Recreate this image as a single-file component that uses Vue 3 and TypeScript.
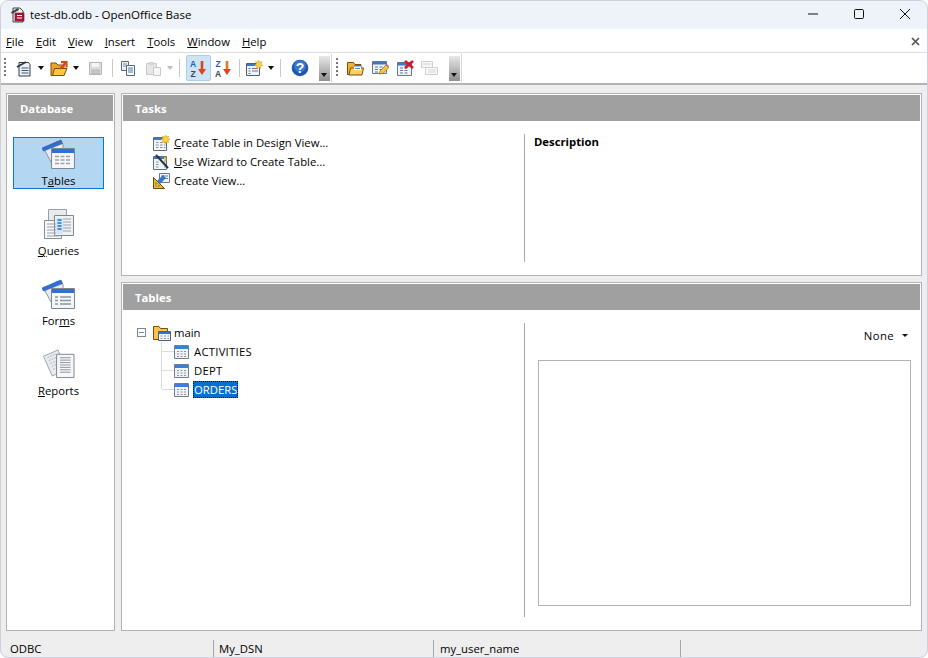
<script setup lang="ts">
const menus = [
  { u: 'F', r: 'ile' },
  { u: 'E', r: 'dit' },
  { u: 'V', r: 'iew' },
  { u: 'I', r: 'nsert' },
  { u: 'T', r: 'ools' },
  { u: 'W', r: 'indow' },
  { u: 'H', r: 'elp' },
]
const tables = ['ACTIVITIES', 'DEPT', 'ORDERS']
</script>

<template>
  <div class="window">
    <header class="titlebar">
      <svg class="app-icon" width="16" height="17" viewBox="0 0 16 17">
        <path d="M3 2h7l3 3v11H3z" fill="#f2f2f2" stroke="#444" />
        <path d="M1 6l7-4 1 2-7 4z" fill="#444" />
        <rect x="5" y="7" width="9" height="8" fill="#a81838" stroke="#6a0f22" stroke-width=".6" />
        <path d="M7 9.500h5M7 12h5" stroke="#fff" />
      </svg>
      <span class="title">test-db.odb - OpenOffice Base</span>
      <div class="win-controls">
        <svg width="12" height="12" viewBox="0 0 12 12"><path d="M1 6h10" stroke="#111" /></svg>
        <svg width="12" height="12" viewBox="0 0 12 12"><rect x="1.500" y="1.500" width="9" height="9" rx="1.200" fill="none" stroke="#111" /></svg>
        <svg width="12" height="12" viewBox="0 0 12 12"><path d="M1 1l10 10M11 1L1 11" stroke="#111" /></svg>
      </div>
    </header>

    <nav class="menubar">
      <span v-for="m in menus" :key="m.u" class="menu-item"><u>{{ m.u }}</u>{{ m.r }}</span>
      <svg class="menu-close" width="9" height="9" viewBox="0 0 9 9"><path d="M1 1l7 7M8 1L1 8" stroke="#555" stroke-width="1.700" /></svg>
    </nav>

    <div class="toolbar">
      <span class="grip"></span>
      <span class="tool w-new">
        <svg width="16" height="17" viewBox="0 0 16 17">
          <path d="M3 2.500h9.500l1.500 2v11.500H3z" fill="#f0f3f6" stroke="#2c3a48" />
          <path d="M1 7l9-5" stroke="#2c3a48" stroke-width="1.800" />
          <path d="M5.500 8h7M5.500 10.500h7M5.500 13h7" stroke="#35587a" stroke-width="1.200" />
        </svg>
      </span>
      <span class="drop"></span>
      <span class="tool w-open">
        <svg width="18" height="17" viewBox="0 0 18 17">
          <path d="M1 3h5l2 2h6v10.500H1z" fill="#eaa91c" stroke="#7a4c08" />
          <path d="M2.500 15.500l2-7h12.500l-3 7z" fill="#fcc93a" stroke="#7a4c08" />
          <path d="M10 9l5.500-6M11 2.200h5.500v5.300" fill="none" stroke="#d9481a" stroke-width="2.200" />
        </svg>
      </span>
      <span class="drop"></span>
      <span class="tool w-save">
        <svg width="15" height="15" viewBox="0 0 15 15">
          <path d="M1.500 1.500h12v12h-12z" fill="#dcdcdc" stroke="#b4b4b4" />
          <path d="M4 2h7v4H4z" fill="#f6f6f6" />
          <path d="M4 9h7v4H4z" fill="#c8c8c8" stroke="#b4b4b4" />
        </svg>
      </span>
      <span class="sep s-a"></span>
      <span class="tool w-copy">
        <svg width="16" height="16" viewBox="0 0 16 16">
          <path d="M1.500 1.500h7v9h-7z" fill="#eef1f4" stroke="#5a6674" />
          <path d="M3 4h4M3 6h4" stroke="#7f8b97" />
          <path d="M6.500 5.500h8v10h-8z" fill="#fff" stroke="#52657a" />
          <path d="M8 8h5M8 10h5M8 12h5" stroke="#3a78b0" />
        </svg>
      </span>
      <span class="tool w-paste">
        <svg width="17" height="16" viewBox="0 0 17 16">
          <path d="M1.500 3.500h10v11h-10z" fill="#e6e6e6" stroke="#c8c8c8" />
          <path d="M4 2h5v3H4z" fill="#d4d4d4" />
          <path d="M8.500 7.500h7v8h-7z" fill="#f6f6f6" stroke="#c8c8c8" />
        </svg>
      </span>
      <span class="drop faded"></span>
      <span class="sep s-b"></span>
      <span class="tool w-sort active">
        <svg width="17" height="18" viewBox="0 0 17 18">
          <text x="0" y="8" class="sort-letter" fill="#1f5fb4">A</text>
          <text x="0.500" y="17.500" class="sort-letter" fill="#33475c">Z</text>
          <path d="M12 2v11" stroke="#d8481c" stroke-width="2.600" />
          <path d="M8 10l4 6 4-6z" fill="#d8481c" />
        </svg>
      </span>
      <span class="tool w-sort2">
        <svg width="17" height="18" viewBox="0 0 17 18">
          <text x="0.500" y="8" class="sort-letter" fill="#1f5fb4">Z</text>
          <text x="0" y="17.500" class="sort-letter" fill="#33475c">A</text>
          <path d="M12 2v11" stroke="#e8742c" stroke-width="2.600" />
          <path d="M8 10l4 6 4-6z" fill="#d8481c" />
        </svg>
      </span>
      <span class="sep s-c"></span>
      <span class="tool w-form">
        <svg width="18" height="17" viewBox="0 0 18 17">
          <path d="M1.500 3.500h13v12h-13z" fill="#f1f4f7" stroke="#4e5f72" />
          <path d="M2 4h12v2H2z" fill="#3a78cc" />
          <path d="M3.500 8.500h2M7 8.500h6M3.500 11h2M7 11h6M3.500 13.500h2" stroke="#66788a" />
          <path d="M13.500 0l1 2.300L17 1.500l-1 2.500 2 1.500-2.500.6.200 2.400-2-1.500-2 1.500.2-2.400L9.500 5.500l2-1.500-1-2.500 2.500.8z" fill="#f9d23c" stroke="#d49a1a" stroke-width=".5" />
        </svg>
      </span>
      <span class="drop"></span>
      <span class="sep s-d"></span>
      <span class="tool w-help">
        <svg width="18" height="18" viewBox="0 0 18 18">
          <circle cx="9" cy="9" r="8.300" fill="#1f57b0" />
          <circle cx="9" cy="7" r="6" fill="#3a78cf" />
          <text x="9" y="14" class="help-q" text-anchor="middle">?</text>
        </svg>
      </span>
      <span class="overflow first"><i></i></span>
      <span class="tb-end"></span>
      <span class="grip g2"></span>
      <span class="tool w-a">
        <svg width="17" height="15" viewBox="0 0 17 15">
          <path d="M.500 1.500h6l1.500 2h6v10H.500z" fill="#f0b52a" stroke="#7a4c08" />
          <path d="M2 14l1.500-7h13L15 14z" fill="#fcd262" stroke="#7a4c08" />
          <path d="M7 4h7v5H7z" fill="#fff" />
          <path d="M7 4h7v1.600H7z" fill="#3a78cc" />
          <path d="M8 7.500h5" stroke="#6e7e8e" />
        </svg>
      </span>
      <span class="tool w-b">
        <svg width="17" height="16" viewBox="0 0 17 16">
          <path d="M.500 1.500h14v12H.500z" fill="#f1f4f7" stroke="#66788a" />
          <path d="M1 2h13v2.500H1z" fill="#3a78cc" />
          <path d="M3 7h3M7.500 7h3M3 9.500h3M7.500 9.500h3M3 12h3" stroke="#66788a" />
          <path d="M7 14l1-3 6-6 3 2.500-6 6z" fill="#f4c542" stroke="#8a6a1a" stroke-width=".7" />
          <path d="M14 5l1-1 2 2-1 1.500z" fill="#ec5a7a" />
        </svg>
      </span>
      <span class="tool w-c">
        <svg width="17" height="16" viewBox="0 0 17 16">
          <path d="M.500 2.500h14v13H.500z" fill="#f1f4f7" stroke="#66788a" />
          <path d="M1 3h13v2.500H1z" fill="#3a78cc" />
          <path d="M3 8h3M7.500 8h3M3 10.500h3M7.500 10.500h3M3 13h3M7.500 13h3" stroke="#66788a" />
          <path d="M8 1l8 7M16 1L8 8" stroke="#d3182c" stroke-width="2.600" />
        </svg>
      </span>
      <span class="tool w-d">
        <svg width="17" height="14" viewBox="0 0 17 14">
          <path d="M.500.500h11v6H.500z" fill="#f6f6f6" stroke="#cfcfcf" />
          <path d="M4.500 6.500h12v7h-12z" fill="#fafafa" stroke="#cfcfcf" />
          <path d="M2 3h8M7 9h8M7 11h8" stroke="#d6d6d6" />
        </svg>
      </span>
      <span class="overflow second"><i></i></span>
      <span class="tb-end"></span>
    </div>

    <div class="body">
      <aside class="panel sidebar">
        <div class="panel-head">Database</div>
        <ul class="nav-list">
          <li class="nav-item selected">
            <svg width="33" height="30" viewBox="0 0 33 30">
              <path d="M2 10l14-8 5 3v18H9z" fill="#e8ecf1" stroke="#8b97a3" />
              <path d="M0 9L19 1l1.500 3.500L1.500 12z" fill="#2f6fd6" stroke="#1f4fae" stroke-width=".6" />
              <path d="M9.500 9.500h23v20h-23z" fill="#f4f6f8" stroke="#7d8791" />
              <path d="M10 10h22v4H10z" fill="#2f6fd6" />
              <path d="M13 17.500h16M13 21h16M13 24.500h16" stroke="#9aa4ae" stroke-width="1.500" stroke-dasharray="4 1.500" />
            </svg>
            <span>T<u>a</u>bles</span>
          </li>
          <li class="nav-item">
            <svg width="30" height="30" viewBox="0 0 30 30">
              <path d="M4.500.500h18v18h-18z" fill="#e8eaec" stroke="#98a0a8" />
              <path d="M.500 11.500h17v18H.500z" fill="#f6f7f8" stroke="#868e96" />
              <path d="M10.500 6.500h19v20h-19z" fill="#eff1f3" stroke="#7d858d" />
              <path d="M3 15h12M3 18h12M3 21h12M3 24h12M3 27h12" stroke="#9aa2aa" />
              <path d="M13 10h14M13 13h14M13 16h14M13 19h14M13 22h14" stroke="#9aa2aa" />
              <path d="M12 9h7v16h-7z" fill="#d3e5f6" />
              <path d="M13.500 11h4M13.500 14h4M13.500 17h4M13.500 20h4" stroke="#1d74c6" stroke-width="1.500" />
            </svg>
            <span><u>Q</u>ueries</span>
          </li>
          <li class="nav-item">
            <svg width="33" height="30" viewBox="0 0 33 30">
              <path d="M2 10l14-8 5 3v18H9z" fill="#e8ecf1" stroke="#8b97a3" />
              <path d="M0 9L19 1l1.500 3.500L1.500 12z" fill="#2f6fd6" stroke="#1f4fae" stroke-width=".6" />
              <path d="M9.500 9.500h23v20h-23z" fill="#f4f6f8" stroke="#7d8791" />
              <path d="M10 10h22v4H10z" fill="#2f6fd6" />
              <path d="M13 18h3M13 21.500h3M13 25h3M18 18h11M18 21.500h11M18 25h11" stroke="#8b97a3" stroke-width="1.300" />
            </svg>
            <span>For<u>m</u>s</span>
          </li>
          <li class="nav-item">
            <svg width="32" height="31" viewBox="0 0 32 31">
              <path d="M0 7.500L15 1l8 20-14 7z" fill="#e9ecef" stroke="#9aa2aa" />
              <path d="M4 9l9-4M5.500 12l9-4M7 15l9-4M8.500 18l9-4M10 21l9-4" stroke="#aab2ba" stroke-dasharray="2 1" />
              <path d="M13.500 5.500h18v24h-18z" fill="#f6f7f8" stroke="#7d858d" />
              <path d="M17 9h11M17 11.500h11M17 14h11M17 16.500h11M17 19h11M17 21.500h11M17 24h11" stroke="#8c949c" />
            </svg>
            <span><u>R</u>eports</span>
          </li>
        </ul>
      </aside>

      <main class="content">
        <section class="panel tasks">
          <div class="panel-head">Tasks</div>
          <div class="split tasks-split">
            <ul class="task-list">
              <li>
                <svg width="17" height="16" viewBox="0 0 17 16">
                  <path d="M.500 2.500h13v13H.500z" fill="#f1f4f7" stroke="#5e6e7e" />
                  <path d="M1 3h12v2H1z" fill="#3a78cc" />
                  <path d="M3 7.500h2.500M7 7.500h2.500M11 7.500h1.500M3 10h2.500M7 10h2.500M11 10h1.500M3 12.500h2.500M7 12.500h2.500M11 12.500h1.500" stroke="#8794a1" />
                  <path d="M12.500 0l1 2 2.200-.8-.8 2.200 2 1-2 1 .8 2.200-2.200-.8-1 2-1-2-2.200.8.800-2.200-2-1 2-1-.8-2.200 2.200.8z" fill="#fbd33a" stroke="#e09a18" stroke-width=".6" />
                </svg>
                <span><u>C</u>reate Table in Design View...</span>
              </li>
              <li>
                <svg width="17" height="16" viewBox="0 0 17 16">
                  <path d="M.500 2.500h13v13H.500z" fill="#f1f4f7" stroke="#5e6e7e" />
                  <path d="M1 3h12v2H1z" fill="#3a78cc" />
                  <path d="M3 8h2.500M3 10.500h2.500M3 13h2.500M11 8h1.500M11 13h1.500" stroke="#8794a1" />
                  <path d="M3 1l12 13" stroke="#24364a" stroke-width="2" />
                  <path d="M11 2l.6 1.400L13 3l-.4 1.400L14 5l-1.400.5L13 7l-1.400-.6L11 8" fill="#fbd33a" stroke="#d49a1a" stroke-width=".5" />
                </svg>
                <span><u>U</u>se Wizard to Create Table...</span>
              </li>
              <li>
                <svg width="17" height="16" viewBox="0 0 17 16">
                  <path d="M6.500.500h10v9h-10z" fill="#f1f4f7" stroke="#66788a" />
                  <path d="M8 3h7M8 5.500h7" stroke="#66788a" />
                  <path d="M.500 15.500V4.500l11 11z" fill="#f5b921" stroke="#6b4a10" />
                  <path d="M3 13v-3.500l3.500 3.500z" fill="#fff" stroke="#6b4a10" stroke-width=".7" />
                  <path d="M4 8l6-6 3 3-6 6z" fill="#3a78cc" />
                </svg>
                <span>Create View...</span>
              </li>
            </ul>
            <div class="side-pane desc">Description</div>
          </div>
        </section>

        <section class="panel tables">
          <div class="panel-head">Tables</div>
          <div class="split tables-split">
            <div class="tree">
              <div class="tree-row root">
                <span class="expander"></span>
                <svg width="18" height="16" viewBox="0 0 18 16">
                  <path d="M.500 1.500h5.500l1.500 2h7v11H.500z" fill="#f8c544" stroke="#7a4c08" />
                  <path d="M5.500 6.500h12v9h-12z" fill="#f4f6f8" stroke="#4e5f72" />
                  <path d="M6 7h11v2H6z" fill="#2f6fd6" />
                  <path d="M7.500 11h2M11 11h2M14.500 11h1.500M7.500 13.500h2M11 13.500h2M14.500 13.500h1.500" stroke="#8794a1" />
                </svg>
                <span>main</span>
              </div>
              <div class="children">
                <div v-for="t in tables" :key="t" class="tree-row child">
                  <span class="branch"></span>
                  <svg width="15" height="14" viewBox="0 0 15 14">
                    <path d="M.500.500h14v13H.500z" fill="#f1f4f7" stroke="#6e7e8e" />
                    <path d="M1 1h13v3H1z" fill="#3a7fd9" />
                    <path d="M3 6.500h2M6.500 6.500h2M10 6.500h2M3 9h2M6.500 9h2M10 9h2M3 11.500h2M6.500 11.500h2M10 11.500h2" stroke="#8794a1" />
                  </svg>
                  <span class="tree-label" :class="{ chosen: t === 'ORDERS' }">{{ t }}</span>
                </div>
              </div>
            </div>
            <div class="side-pane preview">
              <div class="preview-mode">
                <span>None</span>
                <i class="mini-arrow"></i>
              </div>
              <div class="preview-box"></div>
            </div>
          </div>
        </section>
      </main>
    </div>

    <footer class="statusbar">
      <span class="cell c1">ODBC</span>
      <span class="cell c2">My_DSN</span>
      <span class="cell c3">my_user_name</span>
      <span class="cell c4"></span>
    </footer>
  </div>
</template>

<style>
html, body { margin: 0; background: #fff; }
</style>

<style scoped>
.window {
  box-sizing: border-box;
  width: 928px;
  height: 658px;
  display: flex;
  flex-direction: column;
  border: 1px solid #cdcfdc;
  border-radius: 8px;
  overflow: hidden;
  background: #eee;
  color: #000;
  font-family: "Open Sans", "Liberation Sans", sans-serif;
  font-size: 11.3px;
}
u { text-underline-offset: 1px; }
ul { list-style: none; margin: 0; padding: 0; }

.titlebar {
  height: 26px;
  padding-bottom: 2px;
  flex: none;
  display: flex;
  align-items: center;
  background: #eef3f9;
}
.app-icon { margin-left: 9px; }
.title { margin-left: 4px; font-size: 11.5px; }
.win-controls { margin-left: auto; display: flex; gap: 34px; padding-right: 16px; }

.menubar {
  height: 21px;
  padding: 2px 0 0 5px;
  flex: none;
  display: flex;
  align-items: center;
  background: #fff;
  border-bottom: 1px solid #dcdcdc;
}
.menu-item { margin-right: 12px; }
.menu-close { margin-left: auto; margin-right: 7px; }

.toolbar {
  height: 30px;
  flex: none;
  display: flex;
  align-items: center;
  background: #fff;
  border-bottom: 2px solid #b4b4b4;
}
.grip {
  width: 2px;
  height: 20px;
  margin-left: 3px;
  background: repeating-linear-gradient(#777 0 2px, transparent 2px 4px);
}
.grip.g2 { margin-left: 4px; }
.tool { display: flex; align-items: center; justify-content: center; height: 25px; flex: none; }
.w-new { width: 18px; margin-left: 9px; }
.w-open { width: 18px; margin-left: 6px; }
.w-save { width: 15px; margin-left: 9px; }
.w-copy { width: 16px; margin-left: 7px; }
.w-paste { width: 17px; margin-left: 9px; }
.w-sort { width: 25px; margin-left: 6px; }
.w-sort2 { width: 17px; margin-left: 4px; }
.w-form { width: 18px; margin-left: 5px; }
.w-help { width: 18px; margin-left: 10px; }
.w-a { width: 17px; margin-left: 9px; }
.w-b, .w-c { width: 17px; margin-left: 8px; }
.w-d { width: 17px; margin-left: 7px; }
.active { height: 26px; background: #cde4f7; border: 1px solid #a9cfee; border-radius: 2px; box-sizing: border-box; }
.drop {
  width: 0;
  height: 0;
  margin-left: 5px;
  border-left: 3.500px solid transparent;
  border-right: 3.500px solid transparent;
  border-top: 4px solid #111;
  flex: none;
}
.drop.faded { border-top-color: #bbb; }
.sep { width: 1px; height: 18px; background: #c8c8c8; flex: none; }
.s-a { margin-left: 9px; }
.s-b { margin-left: 6px; }
.s-c { margin-left: 7px; }
.s-d { margin-left: 6px; }
.overflow {
  width: 11px;
  height: 25px;
  flex: none;
  position: relative;
  background: linear-gradient(#e8e8e8, #8f8f8f);
}
.overflow.first { margin-left: 10px; }
.overflow.second { margin-left: 11px; }
.overflow i {
  position: absolute;
  left: 2px;
  bottom: 4px;
  width: 0;
  height: 0;
  border-left: 3.500px solid transparent;
  border-right: 3.500px solid transparent;
  border-top: 4px solid #111;
}
.tb-end { width: 1px; height: 28px; background: #d6d6d6; margin-left: 1px; flex: none; }

.body {
  flex: 1;
  display: flex;
  gap: 6px;
  padding: 8px 5px 0;
  min-height: 0;
}
.panel {
  box-sizing: border-box;
  background: #fff;
  border: 1px solid #b2b2b2;
  padding: 1px 1px 0;
}
.panel-head {
  height: 26px;
  box-sizing: border-box;
  line-height: 28px;
  padding-left: 12px;
  background: #a0a0a0;
  color: #fff;
  font-weight: 700;
}
.sidebar { width: 109px; height: 538px; }
.nav-list {
  display: flex;
  flex-direction: column;
  gap: 18px;
  padding: 16px 9px 0 5px;
}
.nav-item {
  box-sizing: border-box;
  height: 52px;
  display: flex;
  flex-direction: column;
  align-items: center;
  padding-top: 1px;
  border: 1px solid transparent;
}
.nav-item > span { margin-top: 4px; }
.nav-item.selected { background: #b3d7f3; border-color: #0a78d0; }
.content { width: 801px; display: flex; flex-direction: column; gap: 6px; height: 538px; }
.tasks { height: 183px; }
.tables { height: 349px; }
.split { display: flex; }
.tasks-split { padding-top: 13px; }
.tables-split { padding-top: 13px; }
.task-list { width: 401px; box-sizing: border-box; padding-left: 30px; margin-top: -1px; }
.task-list li { height: 19px; display: flex; align-items: center; gap: 4px; }
.side-pane { border-left: 1px solid #a8a8a8; flex: 1; box-sizing: border-box; }
.tasks-split .side-pane { height: 128px; }
.desc { padding-left: 9px; font-weight: 700; }
.tree { width: 401px; box-sizing: border-box; padding-left: 14px; }
.tree-row { height: 19px; display: flex; align-items: center; }
.expander {
  box-sizing: border-box;
  width: 9px;
  height: 9px;
  border: 1px solid #7d8791;
  background: linear-gradient(#7d8791, #7d8791) center / 5px 1px no-repeat, #fff;
  margin-right: 7px;
}
.root span:last-child { margin-left: 3px; }
.children { margin-left: 24px; border-left: 1px solid #dcdcdc; height: 47px; }
.branch { width: 12px; height: 1px; background: #dcdcdc; flex: none; }
.tree-label { margin-left: 4px; padding: 0 1px; line-height: 17px; letter-spacing: .25px; }
.tree-label.chosen { background: #0a6fc9; color: #fff; outline: 1px dotted #111; outline-offset: -1px; letter-spacing: 0; }
.preview { height: 294px; display: flex; flex-direction: column; align-items: flex-end; padding-right: 9px; }
.preview-mode { display: flex; align-items: center; height: 25px; padding-right: 3px; letter-spacing: .4px; }
.mini-arrow {
  width: 0;
  height: 0;
  margin-left: 8px;
  border-left: 3px solid transparent;
  border-right: 3px solid transparent;
  border-top: 3px solid #111;
}
.preview-box {
  box-sizing: border-box;
  margin-top: 12px;
  width: 373px;
  height: 246px;
  border: 1px solid #b2b2b2;
}
.statusbar {
  flex: 1;
  display: flex;
  align-items: flex-end;
  min-height: 0;
}
.cell {
  box-sizing: border-box;
  height: 17px;
  line-height: 17px;
  border-right: 1px solid #a8a8a8;
  padding-left: 9px;
  flex: none;
}
.c1 { width: 213px; }
.c2 { width: 220px; padding-left: 5px; }
.c3 { width: 247px; padding-left: 6px; }
.c4 { border-right: 0; }
.sort-letter { font: 700 8.500px "Liberation Sans", sans-serif; }
.help-q { font: 700 14px "Liberation Sans", sans-serif; fill: #fff; }
</style>
